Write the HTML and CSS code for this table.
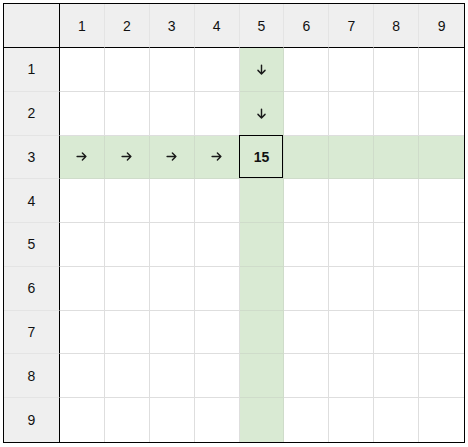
FILE: index.html
```html
<!DOCTYPE html>
<html>
<head>
<meta charset="utf-8">
<link rel="stylesheet" href="styles.css">
</head>
<body>
<div class="sheet">
  <div class="corner"></div>
  <div class="colhead">1</div><div class="colhead">2</div><div class="colhead">3</div><div class="colhead">4</div><div class="colhead">5</div><div class="colhead">6</div><div class="colhead">7</div><div class="colhead">8</div><div class="colhead">9</div>

  <div class="rowhead">1</div>
  <div class="cell"></div><div class="cell"></div><div class="cell"></div><div class="cell"></div>
  <div class="cell hl"><svg class="arr" width="11" height="11" viewBox="0 0 10 10"><path d="M5 1V9M1.8 5.8L5 9L8.2 5.8"/></svg></div>
  <div class="cell"></div><div class="cell"></div><div class="cell"></div><div class="cell"></div>

  <div class="rowhead">2</div>
  <div class="cell"></div><div class="cell"></div><div class="cell"></div><div class="cell"></div>
  <div class="cell hl"><svg class="arr" width="11" height="11" viewBox="0 0 10 10"><path d="M5 1V9M1.8 5.8L5 9L8.2 5.8"/></svg></div>
  <div class="cell"></div><div class="cell"></div><div class="cell"></div><div class="cell"></div>

  <div class="rowhead">3</div>
  <div class="cell hl"><svg class="arr" width="11" height="11" viewBox="0 0 10 10"><path d="M1 5H9M5.8 1.8L9 5L5.8 8.2"/></svg></div>
  <div class="cell hl"><svg class="arr" width="11" height="11" viewBox="0 0 10 10"><path d="M1 5H9M5.8 1.8L9 5L5.8 8.2"/></svg></div>
  <div class="cell hl"><svg class="arr" width="11" height="11" viewBox="0 0 10 10"><path d="M1 5H9M5.8 1.8L9 5L5.8 8.2"/></svg></div>
  <div class="cell hl"><svg class="arr" width="11" height="11" viewBox="0 0 10 10"><path d="M1 5H9M5.8 1.8L9 5L5.8 8.2"/></svg></div>
  <div class="cell hl active">15</div>
  <div class="cell hl"></div><div class="cell hl"></div><div class="cell hl"></div><div class="cell hl"></div>

  <div class="rowhead">4</div>
  <div class="cell"></div><div class="cell"></div><div class="cell"></div><div class="cell"></div><div class="cell hl"></div><div class="cell"></div><div class="cell"></div><div class="cell"></div><div class="cell"></div>
  <div class="rowhead">5</div>
  <div class="cell"></div><div class="cell"></div><div class="cell"></div><div class="cell"></div><div class="cell hl"></div><div class="cell"></div><div class="cell"></div><div class="cell"></div><div class="cell"></div>
  <div class="rowhead">6</div>
  <div class="cell"></div><div class="cell"></div><div class="cell"></div><div class="cell"></div><div class="cell hl"></div><div class="cell"></div><div class="cell"></div><div class="cell"></div><div class="cell"></div>
  <div class="rowhead">7</div>
  <div class="cell"></div><div class="cell"></div><div class="cell"></div><div class="cell"></div><div class="cell hl"></div><div class="cell"></div><div class="cell"></div><div class="cell"></div><div class="cell"></div>
  <div class="rowhead">8</div>
  <div class="cell"></div><div class="cell"></div><div class="cell"></div><div class="cell"></div><div class="cell hl"></div><div class="cell"></div><div class="cell"></div><div class="cell"></div><div class="cell"></div>
  <div class="rowhead">9</div>
  <div class="cell"></div><div class="cell"></div><div class="cell"></div><div class="cell"></div><div class="cell hl"></div><div class="cell"></div><div class="cell"></div><div class="cell"></div><div class="cell"></div>
</div>
</body>
</html>
```
FILE: styles.css
```css
html, body {
  margin: 0;
  padding: 0;
  background: #fff;
}
body {
  padding: 3px;
  font-family: "Liberation Sans", Arial, sans-serif;
  color: #111;
}
.sheet {
  box-sizing: border-box;
  width: 462px;
  height: 440px;
  border: 1px solid #000;
  display: grid;
  grid-template-columns: 56px repeat(9, 1fr);
  grid-template-rows: 44px repeat(9, 1fr);
}
.sheet > div {
  box-sizing: border-box;
  display: flex;
  align-items: center;
  justify-content: center;
  font-size: 14px;
}
.corner {
  background: #efefef;
  border-right: 1px solid #000;
  border-bottom: 1px solid #000;
}
.colhead {
  background: #efefef;
  border-bottom: 1px solid #000;
  border-right: 1px solid #e4e4e4;
}
.rowhead {
  background: #efefef;
  border-right: 1px solid #000;
  border-bottom: 1px solid #e4e4e4;
}
.cell {
  background: #fff;
  border-right: 1px solid #dedede;
  border-bottom: 1px solid #dedede;
}
.sheet > div:nth-child(10n) {
  border-right: none;
}
.sheet > div:nth-child(n+91) {
  border-bottom: none;
}
.cell.hl {
  background: #d9ead3;
  border-right-color: #cfdcca;
  border-bottom-color: #cfdcca;
}
.active {
  position: relative;
  font-weight: bold;
  font-size: 15px;
}
.active::after {
  content: "";
  position: absolute;
  top: -1px;
  left: -1px;
  right: 0;
  bottom: 0;
  border: 1px solid #000;
}
.arr path {
  fill: none;
  stroke: #1a1a1a;
  stroke-width: 1.3;
  stroke-linecap: round;
  stroke-linejoin: round;
}
```
